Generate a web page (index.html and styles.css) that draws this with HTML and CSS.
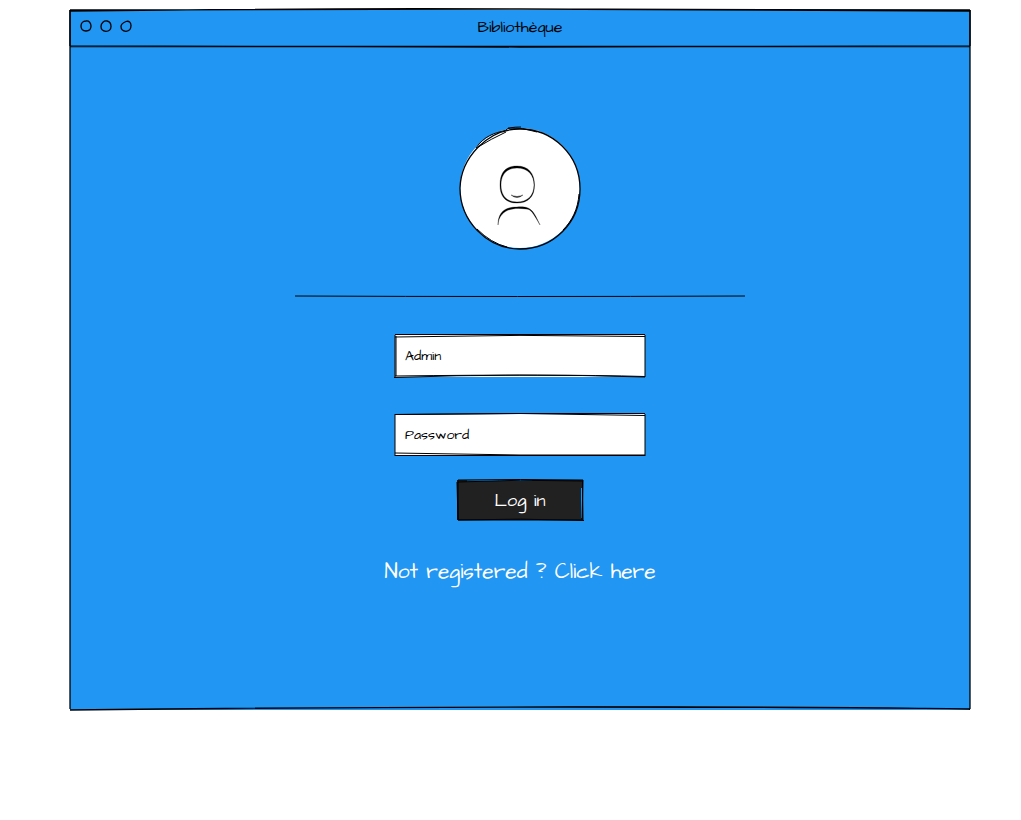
FILE: index.html
```html
<!DOCTYPE html>
<html lang="en">
<head>
<meta charset="utf-8">
<meta name="viewport" content="width=device-width, initial-scale=1">
<title>Bibliothèque</title>
<link rel="stylesheet" href="styles.css">
</head>
<body>
<main class="window">
  <svg class="sketch" viewBox="0 0 900 700" preserveAspectRatio="none" aria-hidden="true">
    <path d="M0 1Q250-2 450-1T900 1M0 0Q250-1 450-1T900 0M900 0V699M0 0V699M0 700Q250 697 500 697T900 699M0 700Q300 697 600 697T900 700"/>
  </svg>
  <header class="titlebar">
    <svg class="dots" viewBox="0 0 54 14" aria-hidden="true">
      <path d="M6 2C9 1.500 11 4 11 7C11 10.500 9 12 6 12C2.500 12 1 10 1 7C1 4 3 2 6 2Z"/>
      <path d="M27 2C30 2.500 31 5 31 7.500C31 10.500 29 12.300 26 12.300C23 12 21 10.500 21 7.500C21 4 24 1.500 27 2Z"/>
      <path d="M46 2.500C49 1.500 51 3.500 51 6.500C51 10 49 12 46 12.400C43 12 41 10.500 41 7.500C41 5 43.500 3.500 46 2.500Z"/>
    </svg>
    <h1 class="title">Bibliothèque</h1>
    <svg class="sketch" viewBox="0 0 900 36" preserveAspectRatio="none" aria-hidden="true">
      <path d="M0 0V36M900 0V36M0 36Q450 38 900 36M0 36.500H900"/>
    </svg>
  </header>
  <form class="login">
    <svg class="avatar" viewBox="0 0 120 120" role="img" aria-label="User">
      <circle class="face" cx="60" cy="60" r="60"/>
      <path d="M60 1C93 1 120 27 120 61S93 121 60 121S0 93 0 60C1 30 27 1 60 1Z"/>
      <path class="thin" d="M16 20C24 8 34 5 47 2M18 19Q31 11 46 4M46 2Q48-1 61-1M48 0Q63-1 77 4M119 66C118 81 112 93 103 102M17 101Q31 115 47 119"/>
      <path class="ink" d="M40 57C40 44 46 38 57 38C68 38 74.500 45 74.500 57C74.500 69 68 75 57 75C46 75 40 69 40 57ZM41 57C41 68 47 74 57 74C67 74 74 68 74 57C74 47 68 40 57 40C47 40 41 46 41 57Z"/>
      <path class="ink" d="M51 67Q57 70 63 67Q57 72 51 67ZM38 97C38 84 45 79 57 79C71 78 73 82 80 97C73 85 71 81 66 81C52 79 39 82 38 97Z"/>
    </svg>
    <svg class="rule" viewBox="0 0 450 2" preserveAspectRatio="none" aria-hidden="true"><path d="M0 1Q220 2 450 1"/></svg>
    <label class="field">
      <input class="input" type="text" placeholder="Admin" aria-label="Admin">
      <svg class="sketch" viewBox="0 0 250 42" preserveAspectRatio="none" aria-hidden="true">
        <path d="M0 2Q125-1 250 1.500M0 -0.500H250M250 0V42M0 0V42M1 1V41M-1 42.500Q125 38 250 42M0 41Q160 39 250 41.500"/>
      </svg>
    </label>
    <label class="field">
      <input class="input" type="password" placeholder="Password" aria-label="Password">
      <svg class="sketch" viewBox="0 0 250 42" preserveAspectRatio="none" aria-hidden="true">
        <path d="M0 0.500Q125-2 250 1.500M0 0.500Q125-1 250-0.500M250 0V42M0 0V42M0 39Q125 42 250 41M0 41.500H250"/>
      </svg>
    </label>
    <button class="submit" type="button">Log in
      <svg class="sketch" viewBox="0 0 126 40" preserveAspectRatio="none" aria-hidden="true">
        <path class="gap" d="M10 1Q40 0 75 0.500M124.500 8V38"/>
        <path d="M1 0Q63-1 126 0M1 2Q63-1 126 1M126 0L125 40M125.500 0L126 40M1 0V40M0 2L1 40M1 40Q63 38 127 40.500M1 40H126"/>
      </svg>
    </button>
    <a class="register" href="#">Not registered ? Click here</a>
  </form>
</main>
</body>
</html>
```
FILE: styles.css
```css
* {
  box-sizing: border-box;
}

body {
  margin: 0;
  padding: 10px 51px 40px 70px;
  background: #fff;
  color: #000;
  font-family: "Architects Daughter", Lato, sans-serif;
}

.window {
  position: relative;
  background: #2196f3;
}

.sketch {
  position: absolute;
  inset: 0;
  width: 100%;
  height: 100%;
  overflow: visible;
  pointer-events: none;
}

.sketch path,
.rule path,
.dots path,
.avatar path {
  fill: none;
  stroke: #000;
  stroke-width: 1.3;
  vector-effect: non-scaling-stroke;
}

.titlebar {
  position: relative;
  display: grid;
  grid-template-columns: 1fr auto 1fr;
  align-items: center;
  height: 36px;
  padding: 0 10px 2px;
}

.dots {
  width: 54px;
  height: 14px;
  margin-bottom: 2px;
}

.title {
  margin: 0;
  font-size: 16px;
  font-weight: 400;
  line-height: 20px;
}

.login {
  display: flex;
  flex-direction: column;
  align-items: center;
  padding: 82px 0 123px;
}

.avatar {
  width: 120px;
  height: 120px;
  margin-bottom: 47px;
  overflow: visible;
}

.avatar .face {
  fill: #fff;
}

.avatar .thin {
  stroke-width: 1;
}

.avatar .ink {
  fill: #000;
  fill-rule: evenodd;
  stroke-width: 0.3;
}

.rule {
  width: 50%;
  height: 2px;
  margin-bottom: 38px;
  overflow: visible;
}

.rule path,
.field .sketch path {
  stroke-width: 1;
}

.field {
  position: relative;
  width: 250px;
  margin-bottom: 37px;
}

.field + .submit {
  margin-top: -13px;
}

.input {
  display: block;
  width: 100%;
  height: 42px;
  padding: 0 10px;
  border: 0;
  border-radius: 0;
  background: #fff;
  color: #000;
  font: inherit;
  font-size: 14px;
}

.input::placeholder {
  color: #000;
  opacity: 1;
}

.submit {
  position: relative;
  width: 126px;
  height: 40px;
  padding: 0;
  border: 0;
  background: #212121;
  color: #fff;
  font: inherit;
  font-size: 18px;
}

.submit .sketch path {
  stroke-width: 1;
}

.submit .sketch .gap {
  stroke: #2196f3;
}

.register {
  margin-top: 37px;
  color: #fff;
  font-size: 21px;
  line-height: 30px;
  text-align: center;
  text-decoration: none;
}
```
